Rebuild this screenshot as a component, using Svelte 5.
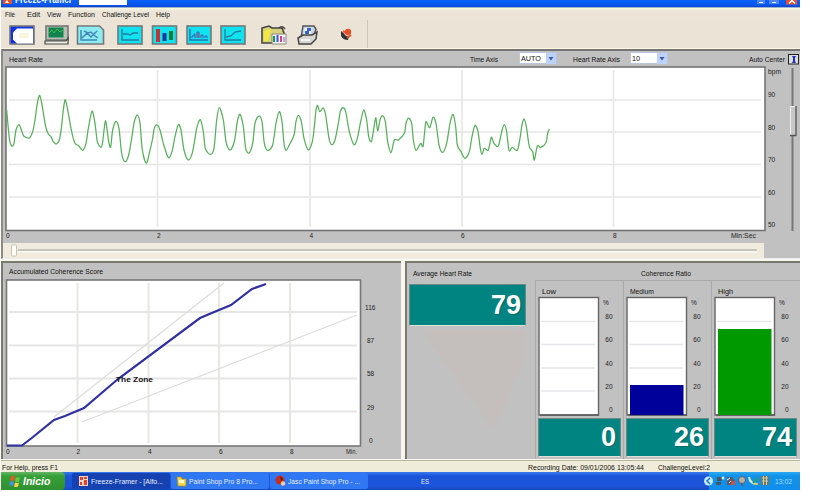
<script>
  const menus = [
    ['File', 10, 12], ['Edit', 13, 7], ['View', 14, 7], ['Function', 27, 7], ['Challenge Level', 47, 7], ['Help', 14, 0]
  ];

  // Heart rate trace in thirds of a pixel, as flat x,y pairs.
  const firstHalf = [20,150,28,235,35,258,42,250,48,210,57,194,66,215,72,229,88,234,98,215,105,180,112,130,119,106,127,140,137,200,145,222,153,230,160,245,169,252,178,240,184,205,190,150,196,119,205,160,215,215,225,250,236,257,248,271,258,250,265,205,276,153,285,190,292,245,303,262,308,245,316,183,322,215,326,245,332,261,338,210,348,184,357,205,365,280,375,305,386,285,395,235,403,185,412,165,420,190,427,270,439,310,449,275,457,240,463,205,471,195,480,210,490,250,505,293,516,275,525,230,535,194,543,210,552,270,565,300,578,275,590,205,601,179,610,215,616,265,631,283,642,265,650,180,658,143,670,180,678,245,690,270,703,245,712,185,720,163,730,200,737,265,747,279,758,250,765,190,777,168,786,185,793,250,803,271,818,255,828,190,838,155];
  const secondHalf = [36,185,42,250,48,271,58,255,72,225,78,185,85,166,94,185,102,235,115,270,127,245,133,200,138,150,143,136,149,155,160,144,167,165,177,235,185,254,195,240,205,190,211,155,219,143,227,155,238,215,252,254,262,235,272,185,281,150,290,180,296,230,304,245,310,215,317,173,323,212,330,180,337,167,346,185,353,245,363,278,373,240,385,240,403,220,408,190,415,174,425,190,430,240,438,271,452,250,459,260,464,215,468,185,479,203,489,172,498,190,507,255,518,277,530,250,540,190,549,163,557,200,562,255,573,275,585,295,598,275,606,230,615,196,624,215,631,265,636,283,643,265,655,270,664,232,672,250,685,258,695,215,703,194,710,215,717,271,727,262,742,271,750,235,756,195,762,177,769,200,778,260,788,275,793,300,802,258,812,262,828,248,833,220,838,207];

  const pairs = (flat, dx) => {
    const out = [];
    for (let i = 0; i < flat.length; i += 2) out.push([(flat[i] + dx) / 3, 60 + flat[i + 1] / 3]);
    return out;
  };

  function smooth(p) {
    let d = `M${p[0]}`;
    for (let i = 0; i < p.length - 1; i++) {
      const a = p[i - 1] ?? p[i], b = p[i], c = p[i + 1], e = p[i + 2] ?? c;
      d += `C${b[0] + (c[0] - a[0]) / 7},${b[1] + (c[1] - a[1]) / 7} ${c[0] - (e[0] - b[0]) / 7},${c[1] - (e[1] - b[1]) / 7} ${c[0]},${c[1]}`;
    }
    return d;
  }

  const trace = smooth([...pairs(firstHalf, 0), ...pairs(secondHalf, 810)]);

  const ratios = [
    { name: 'Low', nameWidth: 14, value: 0, color: '#00009a', height: 0 },
    { name: 'Medium', nameWidth: 24, value: 26, color: '#00009a', height: 30 },
    { name: 'High', nameWidth: 15, value: 74, color: '#009a00', height: 86 }
  ];
  const ratioTicks = [['80', 22.5], ['60', 46], ['40', 69.5], ['20', 93], ['0', 116]];
</script>

{#snippet label(text, width, color = '#111')}
  <svg class="label" {width} height="10"><text x="0" y="7.5" textLength={width} lengthAdjust="spacingAndGlyphs" fill={color}>{text}</text></svg>
{/snippet}

{#snippet arrow()}
  <svg class="arrow" width="10" height="11"><rect width="10" height="11" fill="#bcd2fb" /><path d="M2.500 4h5l-2.500 3.500z" fill="#3b5ba8" /></svg>
{/snippet}

<div class="window">
  <div class="title">
    <svg width="78" height="7"><rect x="2" width="9" height="4" fill="#e5532b" /><path d="M4 3l2-3 2 3z" fill="#fff" /><text x="14" y="2.5" textLength="57" lengthAdjust="spacingAndGlyphs" class="caption">Freeze-Framer</text></svg>
    <span class="blank"></span>
    <svg class="controls" width="44" height="5"><rect x="1" width="8" height="4" fill="#4c86f5" /><path d="M3 2.500h4" stroke="#fff" /><rect x="13" width="10" height="4" fill="#4c86f5" /><path d="M16 2.500h4" stroke="#fff" /><rect x="30" width="11" height="4.500" fill="#e5502e" /><path d="M33 3.500l3-3 3 3" fill="none" stroke="#fff" stroke-width="1.500" /></svg>
  </div>
  <div class="menu">
    {#each menus as [text, width, gap]}
      <span style:margin-right="{gap}px">{@render label(text, width)}</span>
    {/each}
  </div>
  <div class="toolbar">
    <svg width="370" height="28" viewBox="1 20 370 28">
      <g stroke="#777" stroke-width="1.6">
        <rect x="10" y="26" width="24" height="18" fill="#1230e8" />
        <rect x="46" y="26" width="22" height="14" fill="#b9c0b6" />
        <path d="M77.500 26h22l4 4v14h-26z" fill="#8cecf2" />
        <rect x="118" y="26" width="24" height="18" fill="#11e2ef" />
        <rect x="152.500" y="26" width="24" height="18" fill="#11e2ef" />
        <rect x="187" y="26" width="24" height="18" fill="#11e2ef" />
        <rect x="221" y="26" width="24" height="18" fill="#11e2ef" />
      </g>
      <path d="M17 28.500h16v15H17l-4-4v-7z" fill="#fff" /><rect x="19" y="33" width="10" height="5" fill="#fbf5df" />
      <rect x="48.500" y="27.500" width="15" height="10" fill="#12834f" /><path d="M49 33l3-3 2 3 3-4 3 3 3-2" fill="none" stroke="#42be48" />
      <path d="M45 41h21l2-3v6H45z" fill="#f3f1e8" stroke="#444" stroke-width="1.200" />
      <path d="M81 30v10h16M82 38l5-5 4 4 6-6M84 31l4 2 3-1 4 4 3 2" fill="none" stroke="#4286b6" stroke-width="1.500" />
      <path d="M122 29v11h17M123 34h5l2 1 3-2h5" fill="none" stroke="#24799d" stroke-width="1.300" />
      <path d="M156 29h4v13h-4z" fill="#c23333" /><path d="M162.500 33h4v8h-4z" fill="#123a9c" /><path d="M169 31h4v9h-4z" fill="#147b35" />
      <path d="M190 29v11h18" fill="none" stroke="#2870ad" stroke-width="1.400" /><path d="M192 38v-2h2v-2h1v4M197 38v-6h2v6M201 38v-3h2v3M205 38v-2h2v2" fill="none" stroke="#365cb6" /><path d="M198 33v5" stroke="#d24545" />
      <path d="M225 29v11h16M226 37l5-1 4-4 6-1" fill="none" stroke="#24799d" stroke-width="1.300" />
      <path d="M262 28l7-2 3 2h10l2 5v10h-22z" fill="#d9d27c" stroke="#444" stroke-width="1.600" />
      <path d="M264 31l7-2-3 12h-4z" fill="#f1e83f" /><path d="M272 34h14v10h-14z" fill="#f8f6ff" stroke="#887" /><path d="M274 36v6" stroke="#169760" stroke-width="2" /><path d="M277.500 35v7" stroke="#3651e4" stroke-width="2" /><path d="M281 36v6" stroke="#d4467c" stroke-width="2" /><path d="M284 37v5" stroke="#8b53d4" />
      <path d="M279 28q3-3 6 1" stroke="#444" fill="none" stroke-width="1.500" />
      <path d="M303 26h11l2 3-3 9h-12z" fill="#c7d4e9" stroke="#555" stroke-width="1.500" /><path d="M305 28h7l-2 7h-6z" fill="#fff" /><path d="M307 28h4v3h-2v3h-4v-3h2z" fill="#2d62d4" /><path d="M298 38l5-3h9l5-3-1 7-5 5h-12z" fill="#d6d6d2" stroke="#444" stroke-width="1.500" /><path d="M301 40h9" stroke="#fff" stroke-width="1.500" />
      <path d="M341 31q3 2 5 5l3 0-1 4q-5 0-7-4z" fill="#333" /><circle cx="348" cy="32" r="3.200" fill="#e9502a" /><path d="M347 38l4-3M343 31l3 2" stroke="#e9502a" stroke-width="2" />
      <path d="M367.500 20v28" stroke="#cbc8b8" />
    </svg>
  </div>

  <section class="heart">
    <header>
      <span class="name">{@render label('Heart Rate', 34)}</span>
      {@render label('Time Axis', 28)}
      <span class="select auto">{@render label('AUTO', 20)}{@render arrow()}</span>
      {@render label('Heart Rate Axis', 47)}
      <span class="select ten">{@render label('10', 8)}{@render arrow()}</span>
      <span class="center">{@render label('Auto Center', 36)}<svg width="12" height="11"><rect x=".5" y=".5" width="10" height="9.500" fill="#ddd" stroke="#222" /><path d="M4 2h4L7 4v3l1 2H4l1-2V4z" fill="#2030c0" /></svg></span>
    </header>
    <div class="row">
      <svg width="764" height="177" viewBox="2 66 764 177">
        <rect x="6" y="67" width="759" height="163.500" fill="#fff" stroke="#747474" stroke-width="1.600" />
        <g fill="none">
          <path d="M157.500 70v157M310 70v157M462 70v157M613.500 70v157" stroke="#e8e8e2" stroke-width="1.700" />
          <path d="M9 100h752M9 132h752M9 164.500h752M9 197h752" stroke="#e6e6e6" stroke-width="1.500" />
        </g>
        <path d={trace} fill="none" stroke="#58ae5c" stroke-width="1.250" />
        <g class="tick"><text x="6" y="238">0</text><text x="157" y="238">2</text><text x="309.500" y="238">4</text><text x="461" y="238">6</text><text x="613" y="238">8</text><text x="731" y="238" textLength="25" lengthAdjust="spacingAndGlyphs">Min:Sec</text></g>
      </svg>
      <svg width="34" height="177" viewBox="766 66 34 177">
        <g class="tick"><text x="768" y="74" textLength="13" lengthAdjust="spacingAndGlyphs">bpm</text><text x="768" y="97">90</text><text x="768" y="129.500">80</text><text x="768" y="162">70</text><text x="768" y="194.500">60</text><text x="768" y="227">50</text></g>
        <path d="M792.500 68v163" stroke="#777" stroke-width="2" /><rect x="790" y="106" width="6" height="29" fill="#c8c8c8" /><path d="M790.500 135V106.500h5" stroke="#eee" fill="none" /><path d="M796 106v29.500h-6" stroke="#555" stroke-width="1.300" fill="none" />
      </svg>
    </div>
    <div class="slider"><svg width="759" height="15"><path d="M15 7h739" stroke="#b9b7ac" stroke-width="1.500" /><path d="M15 9h739" stroke="#fff" /><rect x="8.500" y="2" width="5" height="11" rx="1" fill="#fffef8" stroke="#c6c4b8" /></svg></div>
  </section>

  <div class="lower">
    <section class="score">
      <header>{@render label('Accumulated Coherence Score', 94)}</header>
      <svg width="397" height="180" viewBox="3 279 397 180">
        <rect x="6.500" y="280" width="354" height="166" fill="#fff" stroke="#777" stroke-width="1.600" />
        <path d="M77.500 283v160M148.500 283v160M219 283v160M290 283v160" stroke="#e8e8e1" stroke-width="2" />
        <path d="M9 312h348M9 345.500h348M9 378.500h348M9 411.500h348" stroke="#e6e6e5" stroke-width="1.800" />
        <path d="M54 417L224 283M82 422L357 315" stroke="#dcdcda" stroke-width="1.200" />
        <path d="M7 445.500h15L33 437L54 420L65 416L84 408L118 379L200 318L213 312.500L231 305L252 289L266 284" fill="none" stroke="#3030a0" stroke-width="2.200" />
        <text class="zone" x="116" y="381.500" textLength="37" lengthAdjust="spacingAndGlyphs">The Zone</text>
        <g class="tick"><text x="6" y="453.500">0</text><text x="76.500" y="453.500">2</text><text x="148" y="453.500">4</text><text x="219" y="453.500">6</text><text x="290" y="453.500">8</text><text x="346" y="453.500" textLength="11" lengthAdjust="spacingAndGlyphs">Min.</text><text x="365" y="309.500">116</text><text x="367" y="343">87</text><text x="367" y="376">58</text><text x="367" y="410">29</text><text x="369" y="443">0</text></g>
      </svg>
    </section>

    <section class="coherence">
      <div class="average">
        <header>{@render label('Average Heart Rate', 59)}</header>
        <div class="readout">79</div>
        <svg width="118" height="131"><path d="M12 4h104v28L87 100h-5z" fill="#c4bfbc" /></svg>
      </div>
      <div class="ratio">
        <header>{@render label('Coherence Ratio', 50)}</header>
        <div class="bars">
          {#each ratios as r}
            <div class="bar">
              <div class="barname">{@render label(r.name, r.nameWidth)}</div>
              <svg width="84" height="122">
                <rect x="1" y="1.500" width="59.500" height="117.500" fill="#fff" stroke="#666" stroke-width="1.400" />
                <path d="M3 25.500h54M3 48.500h54M3 72h54M3 95h54" stroke="#e6e6ea" stroke-width="1.400" />
                <path d="M2 119h59" stroke="#444" />
                {#if r.height}<rect x="4" y={119 - r.height} width="53.500" height={r.height} fill={r.color} />{/if}
                <g class="tick"><text x="65" y="9">%</text>{#each ratioTicks as [t, y]}<text x="74.500" {y} text-anchor="end">{t}</text>{/each}</g>
              </svg>
              <div class="readout small">{r.value}</div>
            </div>
          {/each}
        </div>
      </div>
    </section>
  </div>

  <div class="status">
    <span class="help">{@render label('For Help, press F1', 56)}</span>
    {@render label('Recording Date: 09/01/2006 13:05:44', 116)}
    <span class="level">{@render label('ChallengeLevel:2', 52)}</span>
  </div>

  <div class="taskbar">
    <div class="start">
      <svg width="13" height="14"><path d="M3 2.500q2-1.500 4 0L6 7Q4 5.500 2 7z" fill="#e65a29" /><path d="M8 3q2 1 4 0l-1 4.500q-2 1-4 0z" fill="#65c544" /><path d="M2 8q2-1.500 4 0l-1 4Q3 10.500 1 12z" fill="#4a8cf0" /><path d="M7 8.500q2 1 4 0l-1 4q-2 1-4 0z" fill="#f7d340" /></svg>
      <span>Inicio</span>
    </div>
    <div class="task active"><svg width="12" height="12"><rect x="1" y="1" width="9" height="10" fill="#f3d1c3" /><path d="M2 2h3v3H2zM6 5h3v5H6zM2 7h2v3H2zM6 2h3v2H6z" fill="#df4329" /></svg>{@render label('Freeze-Framer - [Alfo...', 72, '#e6eeff')}</div>
    <div class="task"><svg width="12" height="12"><path d="M1 2h4l1 2h4v7H2z" fill="#f4d849" stroke="#a88d27" stroke-width=".8" /><path d="M3 5h5v3H3z" fill="#fff9cf" /></svg>{@render label('Paint Shop Pro 8 Pro...', 69, '#e6eeff')}</div>
    <div class="task"><svg width="12" height="12"><circle cx="5" cy="5" r="4.500" fill="#c42e1d" /><path d="M5 1l3 3-2 2z" fill="#5a1c1c" /><circle cx="8" cy="8.500" r="2.300" fill="#efcbb4" /></svg>{@render label('Jasc Paint Shop Pro - ...', 72, '#e6eeff')}</div>
    <span class="lang">{@render label('ES', 8, '#e8f2ff')}</span>
    <div class="tray">
      <svg width="66" height="18"><circle cx="-.5" cy="9" r="4.500" fill="#c2ecff" /><path d="M1 6L-2 9l3 3" stroke="#2071dc" fill="none" stroke-width="1.500" /><path d="M8 5h5v4H8zM7 10h5v3H7z" fill="#40576c" /><circle cx="14" cy="6" r="1.500" fill="#d5eaf3" /><path d="M18 5h5l3 4-3 4h-5z" fill="#555f72" /><path d="M18 8l3-2M20 11l2-2" stroke="#fff" /><path d="M22 9l4 4M26 9l-4 4" stroke="#ef4a30" stroke-width="1.500" /><circle cx="33" cy="8" r="3.500" fill="#b9afa9" stroke="#546275" /><path d="M33 11v3" stroke="#526080" stroke-width="2" /><path d="M40 5q1 7 8 7" fill="none" stroke="#dce7df" stroke-width="2" /><path d="M44 11l5-5" stroke="#2b9c6f" stroke-width="2" /><path d="M46 11h3v2h-3z" fill="#e0c545" /><path d="M52 4h8v9h-8z" fill="#6f7962" /><path d="M53 6h6M53 9h6M54.500 4v9M57.500 4v9" stroke="#d2c9a5" /></svg>
      {@render label('13:02', 17, '#a6deff')}
    </div>
  </div>
</div>

<style>
  :global(body) { background: #fff; }
  .window { width: 799px; height: 491px; margin-left: 1px; display: flex; flex-direction: column; overflow: hidden; background: #ece9d8; font-family: "Liberation Sans", Arial, sans-serif; }
  svg { display: block; flex: none; }
  .label { overflow: visible; }
  .label text { font-size: 7px; }
  .tick text { font-size: 6.5px; fill: #222; }
  .zone { font-size: 8px; font-weight: bold; fill: #111; }
  .title { height: 7px; display: flex; background: linear-gradient(#0c60f8, #0559f1 70%, #1742c5); border-bottom: 1px solid #9eb4d4; flex: none; }
  .caption { font-size: 10px; font-weight: bold; fill: #fff; }
  .blank { width: 48px; height: 5px; background: #fff; }
  .controls { margin-left: auto; }
  .menu { height: 12px; padding: 1px 0 0 4px; display: flex; box-sizing: border-box; background: linear-gradient(#fbfae1, #ece5d7 3px); flex: none; }
  .toolbar { height: 29px; background: #ebe4d6; border-bottom: 1px solid #faf7e2; box-sizing: border-box; flex: none; }
  .heart { height: 210px; box-sizing: border-box; background: #c1c1c1; border-top: 2px solid #747474; border-left: 2px solid #8c8c80; border-bottom: 1px solid #eee; display: flex; flex-direction: column; flex: none; }
  .heart header { height: 15px; display: flex; align-items: center; padding: 1px 0 0 6px; box-sizing: border-box; flex: none; }
  .name { width: 461px; }
  .select { height: 12px; display: flex; align-items: center; justify-content: space-between; background: #fff; border: 1px solid #b9c6dd; box-sizing: border-box; }
  .auto { width: 38px; margin: -2px 16px 0 21px; padding-left: 1px; }
  .ten { width: 38px; margin: -2px 0 0 10px; padding-left: 1px; }
  .center { display: flex; gap: 3px; margin-left: auto; align-items: center; }
  .row { display: flex; margin-left: -1px; }
  .slider { width: 761px; height: 15px; background: #f0ebdc; flex: none; }
  .lower { display: flex; gap: 4px; height: 201px; padding-top: 2px; box-sizing: border-box; background: #f8f7ed; flex: none; }
  .score, .coherence { height: 198px; box-sizing: border-box; background: #c1c1c1; border-top: 2px solid #777a6c; border-left: 2px solid #777a6c; }
  .score { width: 400px; }
  .score header { height: 16px; padding: 3px 0 0 6px; box-sizing: border-box; }
  .coherence { width: 395px; display: flex; }
  .average { width: 128px; padding-left: 2px; box-sizing: border-box; }
  .average header { height: 21px; padding: 5px 0 0 4px; box-sizing: border-box; }
  .readout { width: 117px; height: 42px; box-sizing: border-box; padding-right: 4px; display: flex; align-items: center; justify-content: flex-end; background: #008481; border: 1px solid #6b8a86; border-bottom-color: #e1e1dc; color: #fff; font-size: 27px; font-weight: bold; text-shadow: 1px 1px 1px #0446; }
  .ratio { width: 265px; }
  .ratio header { height: 18px; padding: 5px 0 0 106px; box-sizing: border-box; border-bottom: 1px solid #aaa; }
  .bars { display: flex; }
  .bar { width: 88px; height: 178px; padding-left: 2px; border-left: 1px solid #aaa; box-sizing: border-box; }
  .barname { height: 15px; padding: 5px 0 0 4px; box-sizing: border-box; }
  .small { width: 83px; height: 39px; }
  .status { height: 12px; padding: 1px 0 0 1px; display: flex; background: #efecd9; border-top: 1px solid #b9b7a2; box-sizing: border-box; flex: none; }
  .help { width: 526px; }
  .level { margin-left: 14px; }
  .taskbar { height: 19px; display: flex; align-items: center; background: linear-gradient(#3a7af0, #1b54d8 4px, #1c55db 14px, #1848bb); border-bottom: 1px solid #fff; box-sizing: border-box; flex: none; }
  .start { width: 64px; height: 18px; margin-right: 7px; padding-left: 7px; display: flex; align-items: center; gap: 2px; box-sizing: border-box; color: #fff; font-size: 10.5px; font-style: italic; font-weight: bold; border-radius: 0 4px 4px 0; background: linear-gradient(#65b565, #37a037 4px, #2f9030); }
  .task { width: 98px; height: 16px; margin-right: 1px; padding-left: 5px; display: flex; align-items: center; gap: 1px; box-sizing: border-box; background: #2f77f3; border-radius: 2px; }
  .active { background: #1542b0; padding-left: 6px; }
  .lang { margin-left: 52px; }
  .tray { width: 91px; height: 18px; display: flex; align-items: center; margin-left: auto; background: linear-gradient(#2ba9f6, #1193e8 4px, #118dec); }
  .tray svg { overflow: visible; }
</style>
